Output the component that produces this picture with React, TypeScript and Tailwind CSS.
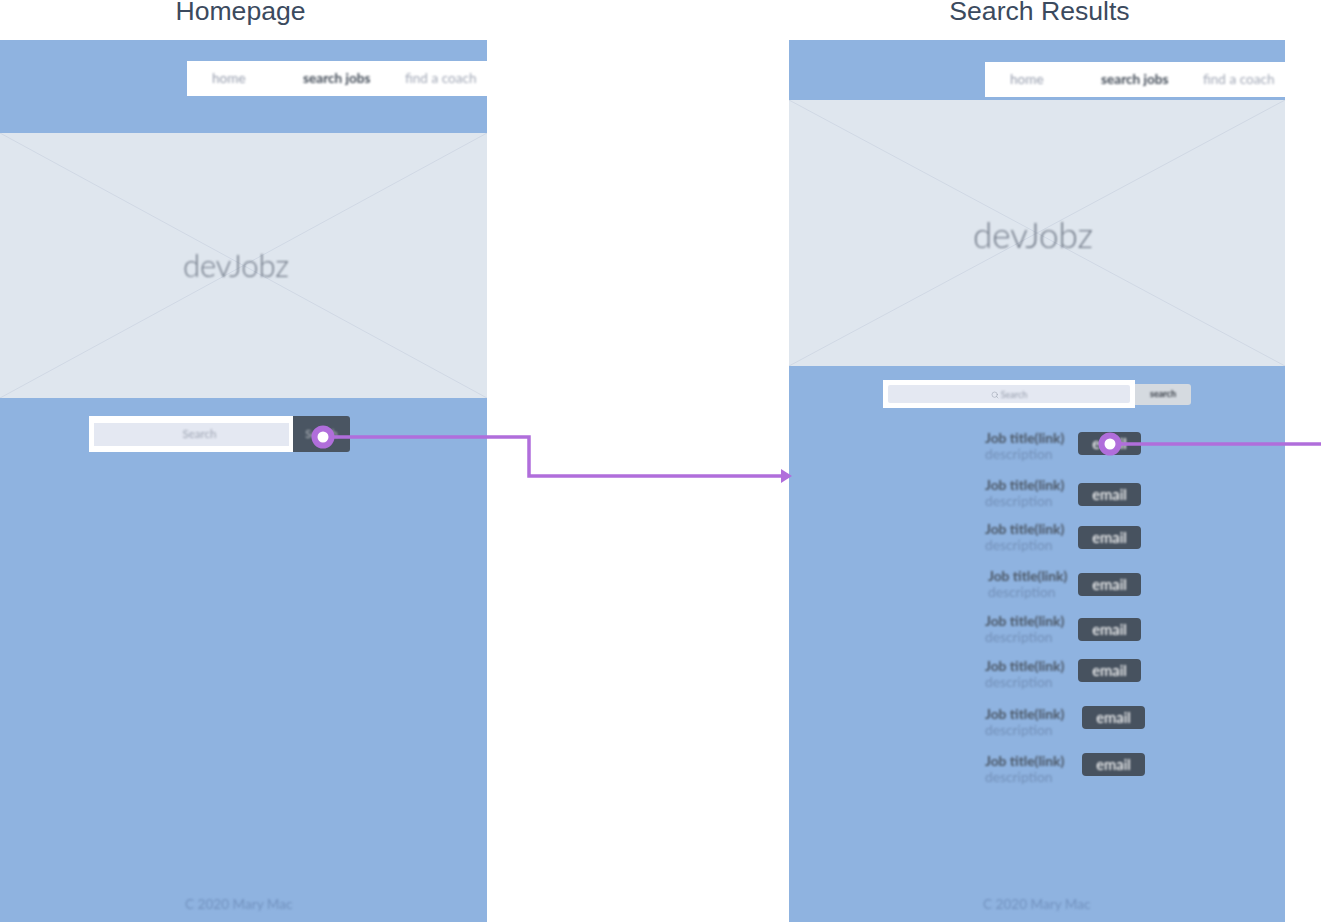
import { Search } from 'lucide-react'

const rows = [
  { key: 1, row: 'mt-[22px]', title: 'ml-0', btn: 'mt-[2px] ml-[93px]' },
  { key: 2, row: 'mt-[15px]', title: 'ml-0', btn: 'mt-[6px] ml-[93px]' },
  { key: 3, row: 'mt-[12px]', title: 'ml-0', btn: 'mt-[5px] ml-[93px]' },
  { key: 4, row: 'mt-[15px]', title: 'ml-[3px]', btn: 'mt-[5px] ml-[90px]' },
  { key: 5, row: 'mt-[13px]', title: 'ml-0', btn: 'mt-[5px] ml-[93px]' },
  { key: 6, row: 'mt-[13px]', title: 'ml-0', btn: 'mt-[1px] ml-[93px]' },
  { key: 7, row: 'mt-[16px]', title: 'ml-0', btn: 'mt-[0px] ml-[97px]' },
  { key: 8, row: 'mt-[15px]', title: 'ml-0', btn: 'mt-[0px] ml-[97px]' },
]

function Nav() {
  return (
    <nav className="ml-auto flex h-[35px] w-[300px] items-center bg-white text-[13.6px]">
      <span className="ml-[25px] w-[34px] text-[#959cac] blur-[1px]">home</span>
      <span className="ml-[57px] w-[68px] whitespace-nowrap font-bold text-[#434c58] blur-[1px]">search jobs</span>
      <span className="ml-[34px] whitespace-nowrap text-[#a3a9b7] blur-[1px]">find a coach</span>
    </nav>
  )
}

function Hero({ className, titleClass }: { className: string; titleClass: string }) {
  return (
    <div className={`relative flex items-center justify-center bg-[#dfe6ee] ${className}`}>
      <svg className="absolute inset-0 h-full w-full" viewBox="0 0 100 100" preserveAspectRatio="none">
        <path d="M0 0L100 100M100 0L0 100" stroke="#d0d8e4" strokeWidth="1" vectorEffect="non-scaling-stroke" fill="none" />
      </svg>
      <span className={`relative leading-none font-light text-[#707987] blur-[1px] ${titleClass}`}>devJobz</span>
    </div>
  )
}

function Footer() {
  return (
    <p className="mt-auto mb-[10px] text-[13.6px] leading-4 text-[#7292bf] blur-[1px]">C 2020 Mary Mac</p>
  )
}

export default function App() {
  return (
    <div className="relative flex h-[923px] w-[1321px] overflow-hidden bg-white font-['Lato',sans-serif]">
      {/* Homepage */}
      <section className="flex w-[487px] flex-col">
        <h2 className="-mt-[4px] h-[44px] pr-[6px] text-center font-['Liberation_Sans',sans-serif] text-[26.6px] leading-[30px] text-[#3b4a5e]">
          Homepage
        </h2>
        <div className="flex h-[882px] flex-col overflow-hidden bg-[#8fb3e0]">
          <div className="h-[93px] pt-[21px]">
            <Nav />
          </div>
          <Hero className="h-[265px]" titleClass="ml-[-15px] text-[31px]" />
          <div className="mt-[18px] ml-[89px] flex h-[36px]">
            <div className="h-[36px] w-[204px] bg-white pt-[7px] pr-[4px] pb-[6px] pl-[5px]">
              <div className="flex h-[23px] items-center justify-center bg-[#e4e8f2] pb-[2px] pl-[16px] text-[11.5px] text-[#9ea5b3]">
                <span className="blur-[1px]">Search</span>
              </div>
            </div>
            <button className="flex h-[36px] w-[57px] items-center justify-center rounded-r-[3px] bg-[#4a5562] text-[11px] text-[#b9bec4]">
              <span className="blur-[1px]">Search</span>
            </button>
          </div>
          <div className="mt-auto ml-[185px] flex flex-col">
            <Footer />
          </div>
        </div>
      </section>

      {/* Search results */}
      <section className="ml-[302px] flex w-[496px] flex-col">
        <h2 className="-mt-[4px] h-[44px] pl-[5px] text-center font-['Liberation_Sans',sans-serif] text-[26.6px] leading-[30px] text-[#3b4a5e]">
          Search Results
        </h2>
        <div className="flex h-[882px] flex-col overflow-hidden bg-[#8fb3e0]">
          <div className="h-[60px] pt-[22px]">
            <Nav />
          </div>
          <Hero className="h-[266px]" titleClass="mt-[3px] ml-[-8px] text-[35px]" />
          <div className="mt-[14px] ml-[94px] flex items-center">
            <div className="h-[28px] w-[252px] bg-white px-[5px] py-[5px]">
              <div className="flex h-[18px] items-center justify-center gap-[2px] rounded-[2px] bg-[#e4e8f2] pt-[1px] text-[9px] text-[#959cab]">
                <Search size={8} strokeWidth={1.5} />
                <span className="blur-[0.8px]">Search</span>
              </div>
            </div>
            <button className="flex h-[21px] w-[56px] items-center justify-center rounded-r-[3px] bg-[#d5dae0] text-[9px] font-bold text-[#2f353e]">
              <span className="blur-[0.8px]">search</span>
            </button>
          </div>
          {rows.map((r) => (
            <div key={r.key} className={`ml-[196px] flex items-start ${r.row}`}>
              <div className={`w-0 whitespace-nowrap text-[13.8px] leading-4 blur-[1px] ${r.title}`}>
                <p className="font-bold text-[#4a5563]">Job title(link)</p>
                <p className="text-[#7390b8]">description</p>
              </div>
              <button className={`flex h-[23px] w-[63px] items-center justify-center rounded-[4px] bg-[#47525f] pb-[1px] text-[14.8px] font-medium text-[#ffffff] ${r.btn}`}>
                <span className="blur-[1px]">email</span>
              </button>
            </div>
          ))}
          <div className="mt-auto ml-[194px] flex flex-col">
            <Footer />
          </div>
        </div>
      </section>

      {/* Connectors */}
      <svg className="pointer-events-none absolute inset-0" width="1321" height="923" fill="none">
        <path d="M323 437H529V476H784" stroke="#b06edb" strokeWidth="3.5" />
        <path d="M781 469L792 476L781 483Z" fill="#b06edb" />
        <circle cx="323" cy="437" r="8.5" fill="#fff" stroke="#b06edb" strokeWidth="6" />
        <path d="M1110 444H1321" stroke="#b06edb" strokeWidth="3.5" />
        <circle cx="1110" cy="444" r="8.5" fill="#fff" stroke="#b06edb" strokeWidth="6" />
      </svg>
    </div>
  )
}
